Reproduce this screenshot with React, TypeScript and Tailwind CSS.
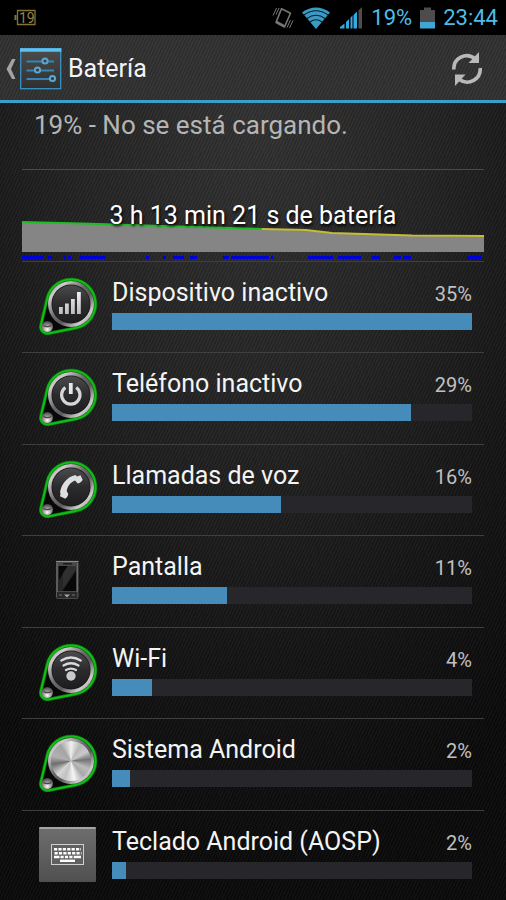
import type { ReactNode } from "react";

type IconKind = "signal" | "power" | "call" | "screen" | "wifi" | "metal" | "keyboard";

const usage: { name: string; percent: string; fill: number; icon: IconKind }[] = [
  { name: "Dispositivo inactivo", percent: "35%", fill: 100, icon: "signal" },
  { name: "Teléfono inactivo", percent: "29%", fill: 83, icon: "power" },
  { name: "Llamadas de voz", percent: "16%", fill: 47, icon: "call" },
  { name: "Pantalla", percent: "11%", fill: 32, icon: "screen" },
  { name: "Wi-Fi", percent: "4%", fill: 11, icon: "wifi" },
  { name: "Sistema Android", percent: "2%", fill: 5, icon: "metal" },
  { name: "Teclado Android (AOSP)", percent: "2%", fill: 4, icon: "keyboard" },
];

// Start and length of each period with the screen awake, on the chart's time axis
const awake = [
  [0, 22], [26, 4], [42, 2], [46, 3], [58, 25], [124, 3], [141, 3], [151, 11], [168, 7],
  [201, 6], [209, 38], [249, 2], [286, 25], [316, 23], [350, 8], [372, 7], [381, 8], [445, 14],
];

function Shared() {
  return (
    <svg className="absolute size-0" aria-hidden="true">
      <defs>
        <linearGradient id="ring" x1="0" y1="0" x2="1" y2="1">
          <stop offset="0" stopColor="#7c7c7c" />
          <stop offset="0.2" stopColor="#d0cbcd" />
          <stop offset="0.45" stopColor="#6a686a" />
          <stop offset="0.6" stopColor="#5a585a" />
          <stop offset="0.8" stopColor="#d0cbcd" />
          <stop offset="1" stopColor="#777" />
        </linearGradient>
        <linearGradient id="face" x1="0" y1="0" x2="0" y2="1">
          <stop offset="0" stopColor="#4b4a4c" />
          <stop offset="0.5" stopColor="#2b2a2c" />
          <stop offset="1" stopColor="#1d1c1e" />
        </linearGradient>
        <radialGradient id="ball" cx="0.5" cy="0.75" r="0.7">
          <stop offset="0" stopColor="#fff" />
          <stop offset="0.4" stopColor="#b0a9ab" />
          <stop offset="1" stopColor="#4c494a" />
        </radialGradient>
        <linearGradient id="glyph" x1="0" y1="0" x2="0" y2="1">
          <stop offset="0" stopColor="#f0f0f0" />
          <stop offset="1" stopColor="#bcbcbc" />
        </linearGradient>
        <linearGradient id="key" x1="0" y1="0" x2="0" y2="1">
          <stop offset="0" stopColor="#6e6e6e" />
          <stop offset="1" stopColor="#505050" />
        </linearGradient>
        <linearGradient id="tile" x1="0" y1="0" x2="0" y2="1">
          <stop offset="0" stopColor="#4c4c4c" />
          <stop offset="1" stopColor="#303030" />
        </linearGradient>
      </defs>
    </svg>
  );
}

function Knob({ metal = false, children }: { metal?: boolean; children?: ReactNode }) {
  return (
    <>
      <path
        d="M1.8 48.4 8.2 21.4A24.5 24.5 0 1 1 36.6 51L9.3 56.4A6.6 6.6 0 0 1 1.8 48.4Z"
        fill="#070807"
        stroke="#08740b"
        strokeWidth="3.4"
      />
      <path
        d="M1.8 48.4 8.2 21.4A24.5 24.5 0 1 1 36.6 51L9.3 56.4A6.6 6.6 0 0 1 1.8 48.4Z"
        fill="none"
        stroke="#12bd17"
        strokeWidth="2"
      />
      <circle cx="32" cy="27" r="23" fill="url(#ring)" />
      <circle cx="32" cy="27" r="19.5" fill={metal ? "#777" : "#151515"} />
      {metal ? (
        <foreignObject x="12" y="7" width="40" height="40">
          <div className="size-[40px] rounded-full bg-[conic-gradient(#f0f0f0,#b8b8b8_30deg,#c9c9c9_60deg,#747474_85deg,#bdbdbd_115deg,#a8a8a8_140deg,#f5f5f5_170deg,#c0c0c0_200deg,#d5d5d5_225deg,#6e6e6e_260deg,#b0b0b0_285deg,#a4a4a4_325deg,#f0f0f0)]" />
        </foreignObject>
      ) : (
        <circle cx="32" cy="27" r="18.8" fill="url(#face)" />
      )}
      {children}
      <circle cx="8.3" cy="49.5" r="5.6" fill="url(#ball)" />
      <path d="M4.5 48.5q3.8 2.4 7.8 0" stroke="#4a4446" strokeWidth="1.2" fill="none" />
    </>
  );
}

function AppIcon({ kind }: { kind: IconKind }) {
  return (
    <svg viewBox="0 0 58 58" className="size-[58px] shrink-0" aria-hidden="true">
      {kind === "signal" && (
        <Knob>
          <path
            d="M20 30h3.8v7H20zM26 26.5h3.8V37H26zM32 22h3.8v15H32zM38 15h3.8v22H38z"
            fill="url(#glyph)"
          />
        </Knob>
      )}
      {kind === "power" && (
        <Knob>
          <path d="M26.4 19.5a9.2 9.2 0 1 0 10.8 0" fill="none" stroke="#d6d6d6" strokeWidth="3.2" />
          <path d="M31.8 15v11" stroke="#e6e6e6" strokeWidth="3.8" />
        </Knob>
      )}
      {kind === "call" && (
        <Knob>
          <path
            d="M21 32.5C22 25 28 16.500 36.500 15L38 16.500l3.500-1.200 2.200 4.400c-1.200 2.300-2.800 3.400-4.900 3.800L36 20.500c-4.500 1.600-7.500 5.800-8.300 10.500l1.600 3c-.4 2-1.400 3.600-3 4.800l-5.300-2.600.6-2.600z"
            fill="#dedede"
          />
        </Knob>
      )}
      {kind === "wifi" && (
        <Knob>
          <g fill="none" stroke="#dadada" strokeWidth="2.3" strokeLinecap="round">
            <path d="M22.3 17.5q9.7-6 19.4 0" />
            <path d="M24.500 22.500q7.500-4.500 15 0" />
            <path d="M27 27q5-2.800 10 0" />
          </g>
          <circle cx="32" cy="33" r="4.7" fill="#cacaca" />
        </Knob>
      )}
      {kind === "metal" && <Knob metal />}
      {kind === "screen" && (
        <>
          <rect x="17" y="10" width="22.5" height="38" rx="2" fill="#484848" />
          <path d="M17 10.5h22.5" stroke="#8a8a8a" strokeWidth="1.2" />
          <path d="M18 12v34M38.6 12v34" stroke="#707070" strokeWidth="1" />
          <path d="M24 12.8h9" stroke="#111" strokeWidth="1.2" />
          <rect x="19.5" y="15" width="17.5" height="25" fill="#080808" />
          <path d="M37 15v5L23.5 40h-4V30l9-15z" fill="#262626" />
          <path d="M37 15v3L24 37V22l5-7z" fill="#303030" />
          <path d="M18 41h20.5v6H18z" fill="#292929" />
          <path d="M25 43.5h6l-3 3z" fill="#a5a5a5" />
          <path d="M20 44h3M33 44h3" stroke="#777" />
        </>
      )}
      {kind === "keyboard" && (
        <>
          <rect x="0" y="1" width="57" height="55" rx="1" fill="url(#key)" />
          <path d="M0.5 2h56" stroke="#a5a5a5" strokeWidth="2" />
          <rect x="12.5" y="18.5" width="32" height="20" fill="#606060" stroke="#cfcfcf" />
          <g stroke="#fff" strokeWidth="2.4">
            <path d="M15 23.3h27" strokeDasharray="3.2 1.2" />
            <path d="M15.5 27.2h27" strokeDasharray="3.2 1.2" />
            <path d="M15 31h5.5M21.5 31h3.2M25.9 31h3.2M30.3 31h3.2M34.7 31h7.3" />
            <path d="M21 34.8h15" />
          </g>
        </>
      )}
    </svg>
  );
}

function StatusBar() {
  return (
    <div className="flex h-[35px] items-center justify-between bg-black pr-2 pl-3.5 text-[22px] text-[#4fbce8]">
      <svg viewBox="0 0 22 18" className="h-[18px] w-[22px]" role="img" aria-label="19">
        <path d="M3.5 1.5h17.5v14H3.5z" fill="none" stroke="#83743a" strokeWidth="1.3" />
        <path d="M1.5 6v5" stroke="#83743a" strokeWidth="2" />
        <text x="5" y="13.5" fontSize="14" fontFamily="Roboto, sans-serif" fill="#968544">
          19
        </text>
      </svg>
      <div className="flex items-center">
        <svg viewBox="0 0 22 24" className="mr-2 h-6 w-[22px]" fill="none" stroke="#777" aria-hidden="true">
          <path d="M9.500 2.700 18.500 7.300 12.500 21 4 16.500z" strokeWidth="1.6" strokeLinejoin="round" />
          <path d="M4.500 2 1 9.500M7 2 4 8.500M21 14.500l-3.500 7.500M18.500 14l-3.500 7.500" strokeWidth="1" />
          <path d="m4.500 15.500 8 4.500" strokeWidth="2" />
        </svg>
        <svg viewBox="0 0 28 22" className="mr-2.5 h-[22px] w-7" aria-hidden="true">
          <path d="M0 5.5Q14-4.5 28 5.5L14 22z" fill="#3c9bc4" />
          <g fill="none" stroke="#06202b" strokeWidth="1.2">
            <path d="M2 8Q14-.5 26 8" />
            <path d="M5 11.500q9-6.500 18 0" />
            <path d="M8 15q6-4.500 12 0" />
          </g>
        </svg>
        <svg viewBox="0 0 23 22" className="mr-2 h-[22px] w-[23px]" aria-hidden="true">
          <path d="M0 21.500v-1.500l4.500-3.500v5zM6 21.500V15l3-3v9.500zM10.500 21.500V10.500L12.500 8.500v13zM13.500 21.500V8L17 4.500v17z" fill="#35a9e0" />
          <path d="M18.500 21.500V3.500L22 0v21.500z" fill="#4d4d4d" />
        </svg>
        <span>19%</span>
        <svg viewBox="0 0 15 22" className="mx-2 h-[22px] w-[15px]" aria-hidden="true">
          <path d="M4 0.5h7V3h4v12H0V3h4z" fill="#4c4c4c" />
          <path d="M0 15h15v6.500H0z" fill="#40a5d4" />
        </svg>
        <span>23:44</span>
      </div>
    </div>
  );
}

function Header() {
  return (
    <header className="flex h-[68px] items-center border-b-[3px] border-[#3c9dcb] bg-[repeating-linear-gradient(115deg,#ffffff08_0px,#ffffff08_1px,#00000014_2px,#00000014_3px)] bg-[#313131] pt-[3px] pr-[22px] pl-1">
      <button className="flex items-center" aria-label="Atrás">
        <svg viewBox="0 0 16 42" className="h-[42px] w-4" aria-hidden="true">
          <path d="M8 11h3.500L7 21l4.500 10H8L2.500 21z" fill="#a3a3a3" />
        </svg>
        <svg viewBox="0 0 42 42" className="size-[42px]" aria-hidden="true">
          <rect x="0.7" y="0.7" width="40" height="40" fill="url(#tile)" stroke="#3793c5" strokeWidth="1.3" />
          <path d="M0 2h41.4" stroke="#5ec0ef" strokeWidth="3.5" />
          <g fill="none" stroke="#3585b7" strokeWidth="1.8">
            <path d="M6.5 13.5H22M28 13.5h6M6.5 22.5h8M20.5 22.5H34M6.5 31h23" />
            <g stroke="#5ba7d3" strokeWidth="2">
              <circle cx="25" cy="13" r="2.6" />
              <circle cx="17.5" cy="22" r="2.6" />
              <circle cx="32.5" cy="30.5" r="2.6" />
            </g>
          </g>
        </svg>
      </button>
      <h1 className="ml-1.5 text-[25px] text-[#f4f4f4]">Batería</h1>
      <button className="ml-auto" aria-label="Actualizar">
        <svg viewBox="0 0 34 34" className="size-[34px]" aria-hidden="true">
          <g fill="none" stroke="#b9b9b9" strokeWidth="3.6">
            <path d="M3.8 17.5A13 13 0 0 1 25 6.7" />
            <path d="M30.2 16A13 13 0 0 1 9.5 27.5" />
          </g>
          <path d="M29 0v11H18.500zM5 34V22.500h10.500z" fill="#b9b9b9" />
        </svg>
      </button>
    </header>
  );
}

function History() {
  return (
    <section className="grid border-t border-[#4a4a4a]">
      <svg viewBox="0 0 462 91" preserveAspectRatio="none" className="col-start-1 row-start-1 h-[91px] w-full" aria-hidden="true">
        <path d="M0 52 60 53.5 140 56 240 59 292 61 306 63 390 65.5 462 67V82H0z" fill="#858585" />
        <path d="M0 52 60 53.5 140 56 240 59" fill="none" stroke="#1fbd24" strokeWidth="2" />
        <path d="M240 59 284 60 310 63 390 65.5 462 66" fill="none" stroke="#c3bd35" strokeWidth="2" />
        {awake.map(([x, w]) => (
          <rect key={x} x={x} y="86" width={w} height="3" fill="#0000d8" />
        ))}
      </svg>
      <p className="col-start-1 row-start-1 mt-[30px] text-center text-[25px] leading-8 text-white [text-shadow:1px_2px_3px_#000]">
        3 h 13 min 21 s de batería
      </p>
    </section>
  );
}

export default function App() {
  return (
    <div className="min-h-screen bg-[#0b0b0b] font-[Roboto,sans-serif]">
      <Shared />
      <StatusBar />
      <Header />
      <main className="bg-[repeating-linear-gradient(115deg,#ffffff08_0px,#ffffff08_1px,#00000014_2px,#00000014_3px),radial-gradient(ellipse_85%_95%_at_50%_0%,#323232,#242424_40%,#121212_78%,#0a0a0a)] px-[22px]">
        <p className="h-[66px] pt-1.5 pl-3 text-[26px] leading-8 text-[#b5b5b5]">
          19% - No se está cargando.
        </p>
        <History />
        <ul>
          {usage.map((item) => (
            <li
              key={item.name}
              className="flex h-[91px] items-start border-t border-[#3f3f3f] pt-[15px] pr-3 pl-[17px] even:h-[92px]"
            >
              <AppIcon kind={item.icon} />
              <div className="ml-[15px] grow">
                <div className="flex items-center justify-between leading-[30px]">
                  <span className="text-[25px] leading-[30px] text-[#f4f4f4]">{item.name}</span>
                  <span className="pt-0.5 text-xl leading-[30px] text-[#c0c0c0]">{item.percent}</span>
                </div>
                <div className="mt-1 h-[17px] bg-[#27262b]">
                  <div className="h-full bg-[#468cbb]" style={{ width: `${item.fill}%` }} />
                </div>
              </div>
            </li>
          ))}
        </ul>
      </main>
    </div>
  );
}
